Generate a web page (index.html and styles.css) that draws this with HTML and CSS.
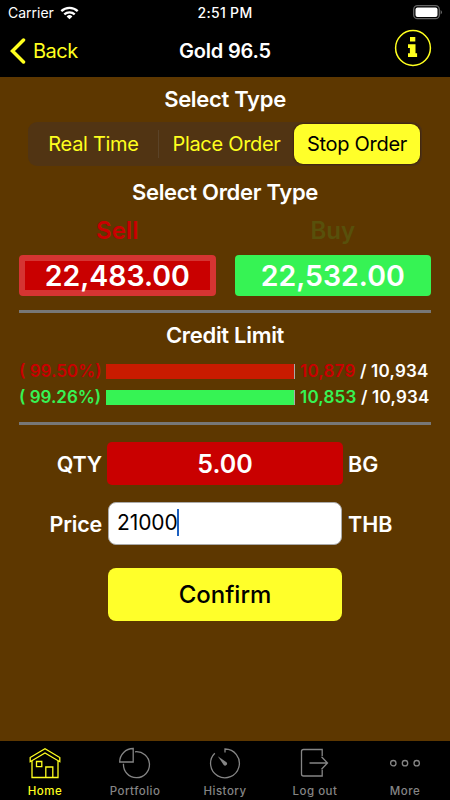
FILE: index.html
```
<!DOCTYPE html>
<html lang="en">
	<head>
		<meta charset="UTF-8" />
		<meta name="viewport" content="width=device-width, initial-scale=1.0" />
		<title>Gold 96.5</title>
		<link rel="stylesheet" href="styles.css">
	</head>
	<body>
		<header>
			<div class="status">
				<div class="carrier">
					<span>Carrier</span>
					<svg width="19" height="14" viewBox="0 0 19 14" fill="none" stroke="#fff" stroke-width="2.3">
						<path d="M1.3 5.2a11.8 11.8 0 0 1 16.4 0" />
						<path d="M4.3 8.4a7.5 7.5 0 0 1 10.4 0" />
						<path d="M9.5 13.3L6.6 10.5a4.2 4.2 0 0 1 5.8 0z" fill="#fff" stroke="none" />
					</svg>
				</div>
				<span class="time">2:51 PM</span>
				<svg class="battery" width="30" height="15" viewBox="0 0 30 15">
					<rect x="0.7" y="0.7" width="25.6" height="13" rx="3.8" fill="none" stroke="#666" stroke-width="1.3" />
					<rect x="2.5" y="2.5" width="22" height="9.5" rx="2" fill="#fff" />
					<path d="M27.6 5v4.4q1.4-.7 1.4-2.2T27.6 5z" fill="#666" />
				</svg>
			</div>
			<div class="nav">
				<a class="back" href="#">
					<svg width="16" height="26" viewBox="0 0 16 26" fill="none" stroke="#ffff1e" stroke-width="3.5" stroke-linecap="round">
						<path d="M13.5 2L2.5 13l11 11" />
					</svg>
					<span>Back</span>
				</a>
				<h1>Gold 96.5</h1>
				<a class="info" href="#">
					<svg width="38" height="38" viewBox="0 0 38 38">
						<circle cx="19" cy="19" r="17.4" fill="none" stroke="#ffff1e" stroke-width="1.5" />
						<path d="M16 8h5.3v4.5H16zM14 15.3h7.5v9h1.6v3.8H14v-3.8h1.9v-5.2H14z" fill="#ffff1e" />
					</svg>
				</a>
			</div>
		</header>

		<main>
			<h2 class="type-title">Select Type</h2>
			<div class="segment">
				<button class="seg real">Real Time</button>
				<button class="seg">Place Order</button>
				<button class="seg active">Stop Order</button>
			</div>

			<h2 class="order-title">Select Order Type</h2>
			<div class="prices">
				<div class="side sell">
					<h3>Sell</h3>
					<button>22,483.00</button>
				</div>
				<div class="side buy">
					<h3>Buy</h3>
					<button>22,532.00</button>
				</div>
			</div>

			<section class="credit">
				<h2>Credit Limit</h2>
				<div class="limit limit-sell">
					<span class="percent">( 99.50%)</span>
					<div class="bar"><div class="fill" style="width: 99.5%"></div></div>
					<span class="amount"><b>10,879</b> / 10,934</span>
				</div>
				<div class="limit limit-buy">
					<span class="percent">( 99.26%)</span>
					<div class="bar"><div class="fill" style="width: 99.26%"></div></div>
					<span class="amount"><b>10,853</b> / 10,934</span>
				</div>
			</section>

			<div class="order">
				<label>QTY</label>
				<button class="qty">5.00</button>
				<span>BG</span>
				<label>Price</label>
				<div class="price"><span>21000</span><i class="cursor"></i></div>
				<span>THB</span>
				<button class="confirm">Confirm</button>
			</div>
		</main>

		<nav class="tabs">
			<a class="tab current" href="#">
				<svg width="34" height="34" viewBox="0 0 34 34">
					<path d="M4 13v17.5h26V13M2.2 10.5L17 1.7l14.8 8.8v4.2L17 5.9 2.2 14.7zM8.5 14.5h5.3v5.2H8.5zM17.8 30.5V20h7v10.5" />
				</svg>
				<span>Home</span>
			</a>
			<a class="tab" href="#">
				<svg width="34" height="34" viewBox="0 0 34 34">
					<path d="M15.2 1.5V15H1.7A13.5 13.5 0 0 1 15.2 1.5z" />
					<path d="M17 4.8A13 13 0 1 1 5.5 16.8" />
				</svg>
				<span>Portfolio</span>
			</a>
			<a class="tab" href="#">
				<svg width="34" height="34" viewBox="0 0 34 34">
					<path d="M17 5.5V2a14.4 14.4 0 1 1-10.2 4.2" />
					<path class="hand" d="M9.8 9.2l8.7 6.1a1.9 1.9 0 1 1-2.8 2.6z" />
				</svg>
				<span>History</span>
			</a>
			<a class="tab" href="#">
				<svg width="34" height="34" viewBox="0 0 34 34">
					<path d="M24.2 9V2.5H5.5Q3.5 2.5 3.5 4.5V27q0 2 2 2h18.7v-6.3M11.5 16h18M23.5 9.8l6 6.2-6 6.2" />
				</svg>
				<span>Log out</span>
			</a>
			<a class="tab" href="#">
				<svg width="34" height="34" viewBox="0 0 34 34">
					<circle cx="5.3" cy="16.2" r="2.7" />
					<circle cx="17" cy="16.2" r="2.7" />
					<circle cx="28.7" cy="16.2" r="2.7" />
				</svg>
				<span>More</span>
			</a>
		</nav>
	</body>
</html>
```
FILE: styles.css
```
* {
	box-sizing: border-box;
}
body {
	margin: 0;
	width: 450px;
	height: 800px;
	display: flex;
	flex-direction: column;
	overflow: hidden;
	background: #5d3700;
	color: #fff;
	font-family: Inter, Roboto, sans-serif;
	white-space: nowrap;
}
a {
	color: inherit;
	text-decoration: none;
}
h1,
h2,
h3 {
	margin: 0;
	font-weight: 600;
}
button {
	padding: 0;
	border: none;
	color: inherit;
	font-family: inherit;
	white-space: nowrap;
}
svg {
	display: block;
	flex: none;
}

/* top bar */
header {
	height: 77px;
	background: #000;
}
.status {
	height: 24px;
	display: grid;
	grid-template-columns: 1fr auto 1fr;
	align-items: center;
	padding: 1px 7px 0;
	font-size: 14px;
}
.carrier {
	display: flex;
	align-items: center;
	gap: 6px;
	padding-left: 1px;
}
.time {
	font-weight: 500;
	letter-spacing: 0.3px;
}
.battery {
	justify-self: end;
}
.nav {
	height: 53px;
	display: grid;
	grid-template-columns: 1fr auto 1fr;
	align-items: center;
	padding: 0 10px;
}
.nav h1 {
	font-size: 20px;
	letter-spacing: -0.2px;
}
.back {
	display: flex;
	align-items: center;
	gap: 7px;
	color: #ffff1e;
	font-size: 20px;
	letter-spacing: -0.5px;
}
.info {
	justify-self: end;
	padding: 0 8px 5px 0;
}

/* order form */
main {
	flex: 1;
	padding: 0 19px;
}
h2 {
	text-align: center;
	font-size: 22px;
	line-height: 30px;
	letter-spacing: -0.3px;
}
.type-title {
	padding-top: 7px;
	height: 45px;
}
.segment {
	width: 394px;
	height: 44px;
	margin-left: 9px;
	padding: 2px 1px;
	display: grid;
	grid-template-columns: 130px 135px 126px;
	background: #513413;
	border-radius: 9px;
}
.seg {
	background: none;
	color: #ffff1e;
	font-size: 20px;
	letter-spacing: -0.3px;
}
.real {
	border-right: 1px solid #5b4328;
	margin: 6px 0;
}
.seg.active {
	background: #ffff2a;
	color: #000;
	border-radius: 9px;
	box-shadow: 0 0 2px #240800;
}
.order-title {
	margin-top: 11px;
}
.prices {
	height: 101px;
	margin-top: 5px;
	display: grid;
	grid-template-columns: 1fr 1fr;
	gap: 19px;
	border-bottom: 3px solid #777;
}
.side h3 {
	height: 43px;
	line-height: 37px;
	font-size: 24px;
	text-align: center;
}
.side button {
	width: 100%;
	height: 41px;
	border-radius: 4px;
	font-size: 28.5px;
	font-weight: 600;
	line-height: 28px;
}
.sell h3 {
	color: #c90000;
}
.sell button {
	background: #c90000;
	border: 6px solid #d53432;
}
.buy h3 {
	color: #58500b;
}
.buy button {
	background: #36f354;
}
.credit {
	height: 112px;
	padding-top: 7px;
	border-bottom: 3px solid #777;
}
.credit h2 {
	height: 43.5px;
}
.limit {
	height: 26.5px;
	display: grid;
	grid-template-columns: 81px 189px 1fr;
	gap: 6px;
	align-items: start;
	font-size: 17px;
	font-weight: 600;
	line-height: 15px;
}
.amount {
	margin-left: -1px;
	letter-spacing: 0.2px;
}
.bar {
	height: 15px;
	background: #aaa;
}
.fill {
	height: 100%;
}
.limit-sell .percent,
.limit-sell b {
	color: #c90000;
}
.limit-sell .fill {
	background: #c91b00;
}
.limit-buy .percent,
.limit-buy b {
	color: #36f354;
}
.limit-buy .fill {
	background: #36f354;
}
.limit b {
	font-weight: 600;
}
.order {
	display: grid;
	grid-template-columns: 83px 236px 1fr;
	grid-template-rows: 43px 43px 53px;
	column-gap: 5px;
	row-gap: 17px;
	padding-top: 17px;
	align-items: center;
	font-size: 21.5px;
	font-weight: 600;
}
.order label {
	justify-self: end;
	letter-spacing: -0.2px;
}
.qty {
	height: 43px;
	background: #c90000;
	border-radius: 5px;
	font-size: 25px;
	font-weight: 600;
}
.price {
	height: 43px;
	margin: 0 1px;
	padding: 0 0 2px 8px;
	display: flex;
	align-items: center;
	background: #fff;
	border: 1px solid #aaa;
	border-radius: 8px;
	color: #000;
	font-size: 21px;
	font-weight: 400;
	letter-spacing: -0.1px;
}
.cursor {
	width: 2px;
	height: 27px;
	margin-left: -1px;
	background: #1c60c0;
}
.confirm {
	grid-column: 2;
	height: 53px;
	margin: 12px 1px 0;
	background: #ffff2a;
	border-radius: 8px;
	color: #000;
	font-size: 24px;
	font-weight: 500;
}

/* bottom tabs */
.tabs {
	height: 59px;
	padding-top: 6px;
	display: grid;
	grid-template-columns: repeat(5, 1fr);
	background: #000;
	color: #858585;
}
.tab {
	display: flex;
	flex-direction: column;
	align-items: center;
	font-size: 11.5px;
	font-weight: 500;
	line-height: 20px;
	letter-spacing: 0.5px;
}
.tab svg {
	fill: none;
	stroke: currentColor;
	stroke-width: 1.3;
}
.tab.current {
	color: #ffff1e;
}
.tab .hand {
	fill: currentColor;
	stroke: none;
}
```
